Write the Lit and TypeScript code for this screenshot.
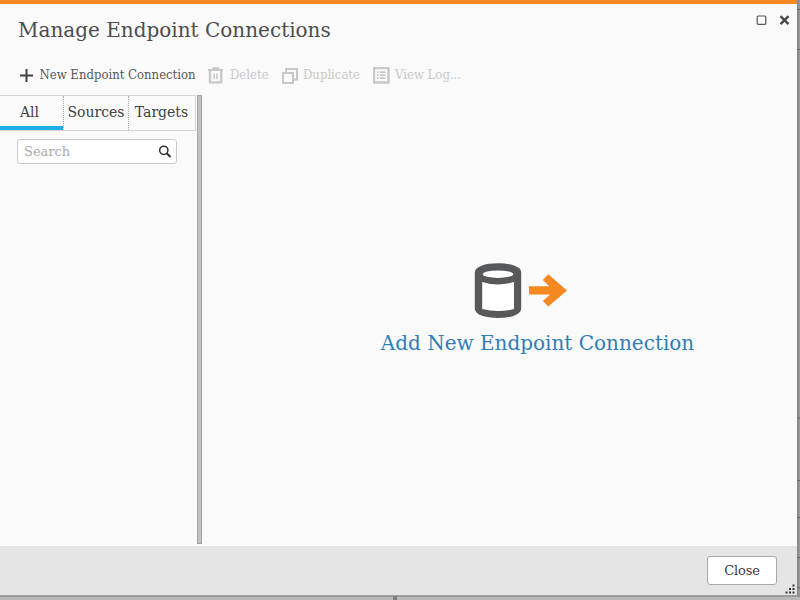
import { LitElement, html, css, svg } from "lit";
import { customElement, state } from "lit/decorators.js";

const icons = {
  add: svg`<path d="M6.500 0v13M0 6.500h13" stroke="#404042" stroke-width="2" fill="none"/>`,
  trash: svg`<g fill="none" stroke="#c8c8c8"><path d="M0 3h15" stroke-width="2"/><path d="M4.500 1.200h6.500" stroke-width="2"/><path d="M2 3v12.400h11.200V3" stroke-width="2.400"/><path d="M6.200 6.200v6M9 6.200v6" stroke-width="1.600"/></g>`,
  duplicate: svg`<g fill="none" stroke="#c8c8c8" stroke-width="2"><path d="M1 5h10v10H1z"/><path d="M4 4.500V1h11v10.500H11.500"/></g>`,
  log: svg`<g fill="none" stroke="#c8c8c8"><path d="M1 1h14.500v14.500H1z" stroke-width="2.400"/><path d="M4 5.200h1.600M4 8.200h1.600M4 11.200h1.600M6.800 5.200h5.600M6.800 8.200h5.600M6.800 11.200h5.600" stroke-width="1.700"/></g>`,
};

@customElement("app-root")
export class AppRoot extends LitElement {
  @state() private tab = "All";

  static styles = css`
    :host {
      display: block;
      width: 800px;
      height: 600px;
      overflow: hidden;
      background: linear-gradient(90deg, #8d8d8d 797px, #858585 798px, #a2a2a2 800px);
      position: relative;
      font-family: "DejaVu Serif", serif;
      color: #404042;
      white-space: nowrap;
    }
    .backdrop { position: absolute; inset: 0; width: 800px; height: 600px; }
    .dialog {
      position: relative;
      box-sizing: border-box;
      width: 797px;
      height: 595px;
      border-top: 4px solid #f68821;
      background: #fafafa;
      display: flex;
      flex-direction: column;
    }
    header { height: 52px; display: flex; justify-content: space-between; flex: none; }
    h1 { margin: 13px 0 0 18px; font-size: 20px; font-weight: 400; line-height: 26px; color: #4d4d4f; }
    .window { display: flex; gap: 12px; padding: 11px 7px 0 0; }
    svg { display: block; flex: none; }
    .toolbar { height: 39px; flex: none; display: flex; align-items: flex-start; padding-left: 20px; font-size: 11.7px; line-height: 18px; }
    .tool { display: flex; height: 38px; align-items: center; color: #58585a; }
    .tool.off { color: #c8c8c8; }
    .tool svg { margin-top: 1px; }
    .tool span { transform: scaleY(1.07); transform-origin: 0 75%; }
    .add { width: 188px; gap: 5.5px; }
    .delete { width: 74px; gap: 7px; }
    .duplicate { width: 91px; gap: 5px; }
    .log { gap: 5px; }
    .main { flex: 1; display: flex; min-height: 0; }
    aside { width: 197px; flex: none; }
    .tabs { height: 34px; width: 195px; display: flex; border: 1px solid #d4d4d4; border-left: 0; box-sizing: content-box; }
    .tab { box-sizing: border-box; border-right: 1px dotted #a9a9a9; text-align: center; font-size: 14px; line-height: 33px; width: 65px; }
    .tab:first-child { width: 64px; padding-right: 4px; }
    .tab:last-child { border: 0; width: 66px; padding-right: 1px; }
    .tab.active { box-shadow: inset 0 -4px #1faee5; }
    .search { margin: 8px 0 0 17px; width: 160px; height: 25px; box-sizing: border-box; border: 1px solid #c9c9c9; border-radius: 3px; background: #fff; display: flex; justify-content: space-between; padding: 0 4px 0 6px; color: #a9a9a9; font-size: 13px; line-height: 23px; }
    .search svg { margin-top: 5px; }
    .splitter { box-sizing: border-box; width: 5px; height: 449px; background: #c3c2c3; border: 1px solid #a5a4a5; flex: none; }
    .empty { box-sizing: border-box; min-width: 0; flex: 1; display: flex; flex-direction: column; align-items: center; padding: 168px 0 0 76px; }
    .picture { margin-right: 33px; }
    .link { margin-top: 10px; font-size: 20px; line-height: 28px; color: #2f7fb9; }
    footer { height: 49px; flex: none; box-sizing: border-box; background: #e5e5e5; display: flex; justify-content: flex-end; padding: 10px 20px 0 0; }
    .close { width: 70px; height: 29px; box-sizing: border-box; border: 1px solid #aaa; border-radius: 3px; background: #fff; font-size: 13px; letter-spacing: -0.15px; line-height: 27px; text-align: center; color: #38383a; }
    .grip { position: absolute; right: 2px; bottom: 1px; }
  `;

  render() {
    return html`
      <svg class="backdrop" viewBox="0 0 800 600">
        <path d="M0 595.5h798" stroke="#a0a0a0"/>
        <path d="M0 596.5h798" stroke="#999"/>
        <path d="M0 597h800v3H0z" fill="#b9b9b9"/>
        <path d="M393 596h4v4h-4z" fill="#7c7c7c"/>
        <path d="M797 9.5h3M797 49.5h3M797 418h3M797 480.5h3M797 517.5h3M797 557.5h3M797 587.5h3" stroke="#666"/>
      </svg>
      <section class="dialog">
        <header>
          <h1>Manage Endpoint Connections</h1>
          <div class="window">
            <svg width="11" height="11"><rect x="1.2" y="1" width="8.6" height="8.4" rx="1.2" fill="none" stroke="#555557" stroke-width="1.2"/></svg>
            <svg width="11" height="11"><path d="M1.5 1.2l8 8M9.5 1.2l-8 8" stroke="#48484a" stroke-width="2.4"/></svg>
          </div>
        </header>
        <div class="toolbar">
          <div class="tool add"><svg width="14" height="14">${icons.add}</svg><span>New Endpoint Connection</span></div>
          <div class="tool off delete"><svg width="15" height="17">${icons.trash}</svg><span>Delete</span></div>
          <div class="tool off duplicate"><svg width="16" height="16">${icons.duplicate}</svg><span>Duplicate</span></div>
          <div class="tool off log"><svg width="17" height="17">${icons.log}</svg><span>View Log...</span></div>
        </div>
        <div class="main">
          <aside>
            <div class="tabs">
              ${["All", "Sources", "Targets"].map(
                (t) => html`<div class="tab ${t === this.tab ? "active" : ""}" @click=${() => (this.tab = t)}>${t}</div>`
              )}
            </div>
            <div class="search"><span>Search</span><svg width="14" height="14"><circle cx="5.8" cy="5.3" r="4.1" fill="none" stroke="#303032" stroke-width="1.5"/><path d="M8.7 8.2l3.8 3.8" stroke="#303032" stroke-width="2"/></svg></div>
          </aside>
          <div class="splitter"></div>
          <div class="empty">
            <svg class="picture" width="94" height="56" viewBox="474 263 94 56">
              <path d="M474.800 272.500C474.800 266.500 485 263.200 498 263.200s23.200 3.300 23.200 9.300v36c0 6-10.200 9.500-23.200 9.500s-23.200-3.500-23.200-9.500z" fill="#58595b"/>
              <ellipse cx="498" cy="274.200" rx="15.200" ry="3.700" fill="#fff"/>
              <path d="M482.200 282q15.900 5 31.800 0v27q-15.900 4-31.800 0z" fill="#fff"/>
              <path d="M529 286.300h20.200l-6.300-6.200 5.400-5.900 18.700 16.200-18.700 16.200-5.400-5.500 7.200-6.700H529z" fill="#f68821"/>
            </svg>
            <div class="link">Add New Endpoint Connection</div>
          </div>
        </div>
        <footer><div class="close">Close</div></footer>
        <svg class="grip" width="10" height="10" fill="#333"><path d="M7.500 0.500h2v2h-2zM4 4h2v2H4zM7.500 4h2v2h-2zM.5 7.500h2v2h-2zM4 7.500h2v2H4zM7.500 7.500h2v2h-2z"/></svg>
      </section>
    `;
  }
}
